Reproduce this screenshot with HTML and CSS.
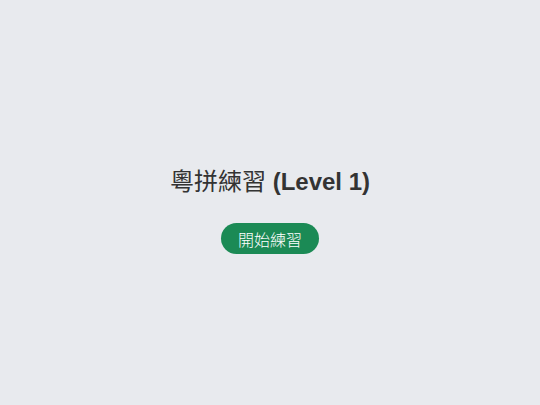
FILE: index.html
```html
<!DOCTYPE html>
<html lang="zh-Hant">
<head>
<meta charset="utf-8">
<link rel="stylesheet" href="styles.css">
</head>
<body>
<main class="screen">
  <h1 class="title"><span class="cjk">粵拼練習</span> (Level 1)</h1>
  <button class="start">開始練習</button>
</main>
</body>
</html>
```
FILE: styles.css
```css
html, body {
  margin: 0;
  height: 100%;
  background: #e8eaee;
}
.screen {
  box-sizing: border-box;
  height: 100%;
  padding-top: 17px;
  display: flex;
  flex-direction: column;
  align-items: center;
  justify-content: center;
  font-family: "Liberation Sans", "Noto Sans CJK TC", sans-serif;
}
.title {
  margin: 0 0 27px;
  font-size: 24px;
  font-weight: bold;
  color: #333;
  line-height: 28px;
}
.cjk {
  font-weight: normal;
}
.start {
  height: 31px;
  padding: 0 17px;
  border: none;
  border-radius: 16px;
  background: #1b8a55;
  color: #fff;
  font-family: "Liberation Sans", "Noto Sans CJK TC", sans-serif;
  font-size: 16px;
  font-weight: 300;
}
```
